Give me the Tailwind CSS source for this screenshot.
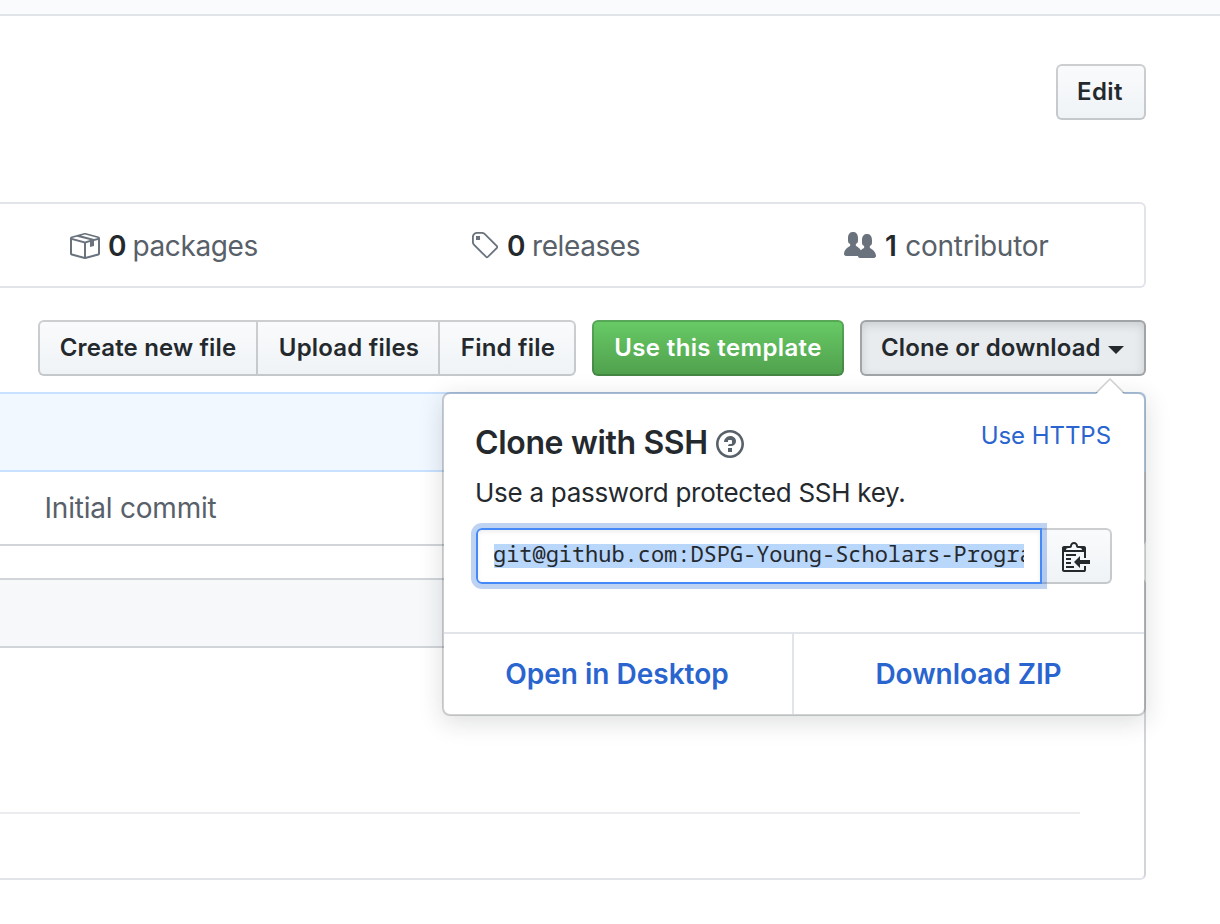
<!DOCTYPE html>
<html lang="en">
<head>
<meta charset="utf-8">
<title>Clone or download</title>
<script src="https://cdn.jsdelivr.net/npm/@tailwindcss/browser@4"></script>
</head>
<body class="bg-white">
<div class="relative h-[924px] w-[1220px] overflow-hidden bg-white font-['Inter',sans-serif] text-[#24292e]">
  <header class="h-4 border-b-2 border-[#e1e4e8] bg-[#fafbfc]"></header>

  <main class="w-[1146px]">
    <div class="flex justify-end pt-12">
      <button class="flex h-14 w-[90px] items-center justify-center rounded-[6px] border-2 border-[#1b1f23]/20 bg-linear-to-b from-[#fafbfc] to-[#eff3f6] bg-origin-border pr-0.5 text-2xl font-semibold tracking-[0.4px]">Edit</button>
    </div>

    <!-- Repository numbers -->
    <ul class="mt-[82px] flex h-[86px] items-center rounded-r-[6px] border-2 border-l-0 border-[#e1e4e8] pt-px text-[28px] leading-[42px] text-[#586069]">
      <li class="flex w-[402px] items-center pl-[68px]">
        <svg class="h-8 w-8 text-[#6a737d]" viewBox="0 0 16 16" fill="currentColor"><path fill-rule="evenodd" d="M1 4.27v7.47c0 .45.3.84.75.97l6.5 1.73c.16.05.34.05.5 0l6.5-1.73c.45-.13.75-.52.75-.97V4.27c0-.45-.3-.84-.75-.97l-6.5-1.74a1.4 1.4 0 0 0-.5 0L1.75 3.3c-.45.13-.75.52-.75.97zm7 9.09l-6-1.59V5l6 1.61v6.75zM2 4l2.5-.67L11 5.06l-2.5.67L2 4zm13 7.77l-6 1.59V6.61l2-.55V8.5l2-.53V5.53L15 5v6.77zm-2-7.24L6.5 2.8l2-.53L15 4l-2 .53z"/></svg>
        <span class="ml-2 font-semibold text-[#24292e]">0</span><span class="ml-[6px] tracking-[-0.4px]">packages</span>
      </li>
      <li class="flex w-[372px] items-center pl-[68px]">
        <svg class="h-8 w-7 text-[#6a737d]" viewBox="0 0 14 16" fill="currentColor"><path fill-rule="evenodd" d="M7.73 1.73C7.26 1.26 6.62 1 5.96 1H3.5C2.13 1 1 2.13 1 3.5v2.47c0 .66.27 1.3.73 1.77l6.06 6.06c.39.39 1.02.39 1.41 0l4.59-4.59a.996.996 0 0 0 0-1.41L7.73 1.73zM2.38 7.09c-.31-.3-.47-.7-.47-1.13V3.5c0-.88.72-1.59 1.59-1.59h2.47c.42 0 .83.16 1.13.47l6.14 6.13-4.73 4.73-6.13-6.15zM3.01 3h2v2H3V3h.01z"/></svg>
        <span class="ml-[9px] font-semibold text-[#24292e]">0</span><span class="ml-[6.5px] tracking-[-0.4px]">releases</span>
      </li>
      <li class="flex items-center pl-[70px]">
        <svg class="h-8 w-8 text-[#6a737d]" viewBox="0 0 16 16" fill="currentColor"><path fill-rule="evenodd" d="M16 12.999c0 .439-.45 1-1 1H7.995c-.539 0-.994-.447-.995-.999H1c-.54 0-1-.561-1-1 0-2.634 3-4 3-4s.229-.409 0-1c-.841-.621-1.058-.59-1-3 .058-2.419 1.367-3 2.5-3s2.442.58 2.5 3c.058 2.41-.159 2.379-1 3-.229.59 0 1 0 1s1.549.711 2.42 2.088C9.196 9.369 10 8.999 10 8.999s.229-.409 0-1c-.841-.62-1.058-.59-1-3 .058-2.419 1.367-3 2.5-3s2.437.581 2.495 3c.059 2.41-.158 2.38-1 3-.229.59 0 1 0 1s3.005 1.366 3.005 4z"/></svg>
        <span class="ml-[9px] font-semibold text-[#24292e]">1</span><span class="ml-[8.5px] tracking-[-0.27px]">contributor</span>
      </li>
    </ul>

    <!-- File actions -->
    <div class="mt-8 flex h-14 justify-end gap-4 text-2xl font-semibold">
      <div class="flex">
        <button class="flex w-[220px] items-center justify-center rounded-l-[6px] border-2 border-[#1b1f23]/20 bg-linear-to-b from-[#fafbfc] to-[#eff3f6] bg-origin-border tracking-[0.15px]">Create new file</button>
        <button class="flex w-[180px] items-center justify-center border-y-2 border-[#1b1f23]/20 bg-linear-to-b from-[#fafbfc] to-[#eff3f6] bg-origin-border pl-0.5 tracking-[0.2px]">Upload files</button>
        <button class="flex w-[138px] items-center justify-center rounded-r-[6px] border-2 border-[#1b1f23]/20 bg-linear-to-b from-[#fafbfc] to-[#eff3f6] bg-origin-border pl-0.5 tracking-[0.23px]">Find file</button>
      </div>
      <button class="flex w-[252px] items-center justify-center rounded-[6px] border-2 border-[#1b1f23]/20 bg-linear-to-b from-[#68cb66] to-[#50a04d] bg-origin-border tracking-[0.37px] text-white">Use this template</button>
      <button class="flex w-[286px] items-center rounded-[6px] border-2 border-[#1b1f23]/35 bg-[#e9ecef] pl-[19px] tracking-[0.12px] shadow-[inset_0_3px_10px_rgba(27,31,35,0.15)]">Clone or download<span class="mt-1 ml-[7.5px] border-x-8 border-t-8 border-x-transparent border-t-[#24292e]"></span></button>
    </div>

    <!-- Latest commit and file row -->
    <section class="mt-4 h-[154px]">
      <div class="h-20 rounded-tr-[6px] border-2 border-l-0 border-[#c8e1ff] bg-[#f1f8ff]"></div>
      <div class="flex h-[74px] items-center rounded-br-[6px] border-r-2 border-b-2 border-[#d1d5da] pl-[44.5px] text-[28px] tracking-[-0.21px] text-[#586069]">Initial commit</div>
    </section>

    <!-- Readme -->
    <section class="mt-8 h-[302px] rounded-r-[6px] border-r-2 border-b-2 border-r-[#d1d5da] border-b-[#e1e4e8]">
      <div class="h-[70px] rounded-tr-[6px] border-y-2 border-[#d1d5da] bg-[#f6f8fa]"></div>
      <hr class="mt-[164px] w-[1080px] border-0 border-t-2 border-[#eaecef]">
    </section>
  </main>

  <!-- Clone dropdown -->
  <div class="absolute top-[392px] left-[442px] h-[324px] w-[704px] rounded-[8px] border-2 border-[#1b1f23]/20 bg-white bg-clip-padding shadow-[0_6px_24px_rgba(27,31,35,0.15)]">
    <svg class="absolute -top-4 right-5 h-4 w-7" viewBox="0 0 28 16"><path d="M0 16 14 2 28 16z" fill="#fff"/><path d="M0 15 14 1 28 15" fill="none" stroke="#1b1f23" stroke-opacity=".2" stroke-width="1.5"/></svg>
    <div class="h-[238px] pl-8">
      <div class="flex h-[80px] items-start justify-between pr-[33px]">
        <h4 class="-ml-px flex items-center pt-[29px] text-[32px] leading-10 font-semibold tracking-[-0.35px]">Clone with SSH
          <svg class="mt-px ml-[8px] h-8 w-7 text-[#586069]" viewBox="0 0 14 16" fill="currentColor"><path fill-rule="evenodd" d="M6 10h2v2H6v-2zm4-3.5C10 8.64 8 9 8 9H6c0-.55.45-1 1-1h.5c.28 0 .5-.22.5-.5v-1c0-.28-.22-.5-.5-.5h-1c-.28 0-.5.22-.5.5V7H4c0-1.5 1.5-3 3-3s3 1 3 2.5zM7 2.3c3.14 0 5.7 2.56 5.7 5.7s-2.56 5.7-5.7 5.7A5.71 5.71 0 0 1 1.3 8c0-3.14 2.56-5.7 5.7-5.7zM7 1C3.14 1 0 4.14 0 8s3.14 7 7 7 7-3.14 7-7-3.14-7-7-7z"/></svg>
        </h4>
        <a class="pt-[24px] text-2xl leading-9 tracking-[-0.05px] text-[#2a65cf]">Use HTTPS</a>
      </div>
      <p class="-ml-px h-[54px] text-[26px] leading-[37px] tracking-[-0.28px]">Use a password protected SSH key.</p>
      <div class="flex h-14">
        <div class="relative z-10 flex w-[566px] items-center rounded-l-[6px] border-2 border-[#4389f7] px-4 shadow-[inset_0_2px_4px_rgba(27,31,35,0.075),0_0_0_5px_rgba(3,80,206,0.26)]">
          <div class="h-6 w-[530px] overflow-hidden bg-[#b9d6fb] font-['Noto_Sans_Mono','DejaVu_Sans_Mono',monospace] text-[22px] leading-[19px] tracking-[-0.04px] whitespace-nowrap -indent-px">git@github.com:DSPG-Young-Scholars-Program</div>
        </div>
        <button class="-ml-0.5 flex w-[72px] items-center justify-center rounded-r-[6px] border-2 border-[#1b1f23]/20 bg-linear-to-b from-[#fafbfc] to-[#eff3f6] bg-origin-border">
          <svg class="h-8 w-7" viewBox="0 0 14 16" fill="currentColor"><path fill-rule="evenodd" d="M2 13h4v1H2v-1zm5-6H2v1h5V7zm2 3V8l-3 3 3 3v-2h5v-2H9zM4.5 9H2v1h2.5V9zM2 12h2.5v-1H2v1zm9 1h1v2c-.02.28-.11.52-.3.7-.19.18-.42.28-.7.3H1c-.55 0-1-.45-1-1V4c0-.55.45-1 1-1h3c0-1.11.89-2 2-2 1.11 0 2 .89 2 2h3c.55 0 1 .45 1 1v5h-1V6H1v9h10v-2zM2 5h8c0-.55-.45-1-1-1H8c-.55 0-1-.45-1-1s-.45-1-1-1-1 .45-1 1-.45 1-1 1H3c-.55 0-1 .45-1 1z"/></svg>
        </button>
      </div>
    </div>
    <div class="flex h-[82px] border-t-2 border-[#e1e4e8] text-[28px] font-semibold text-[#2a65cf]">
      <a class="flex w-[350px] items-center justify-center border-r-2 border-[#e1e4e8] pr-0.5">Open in Desktop</a>
      <a class="flex flex-1 items-center justify-center pr-px tracking-[-0.05px]">Download ZIP</a>
    </div>
  </div>
</div>
</body>
</html>
